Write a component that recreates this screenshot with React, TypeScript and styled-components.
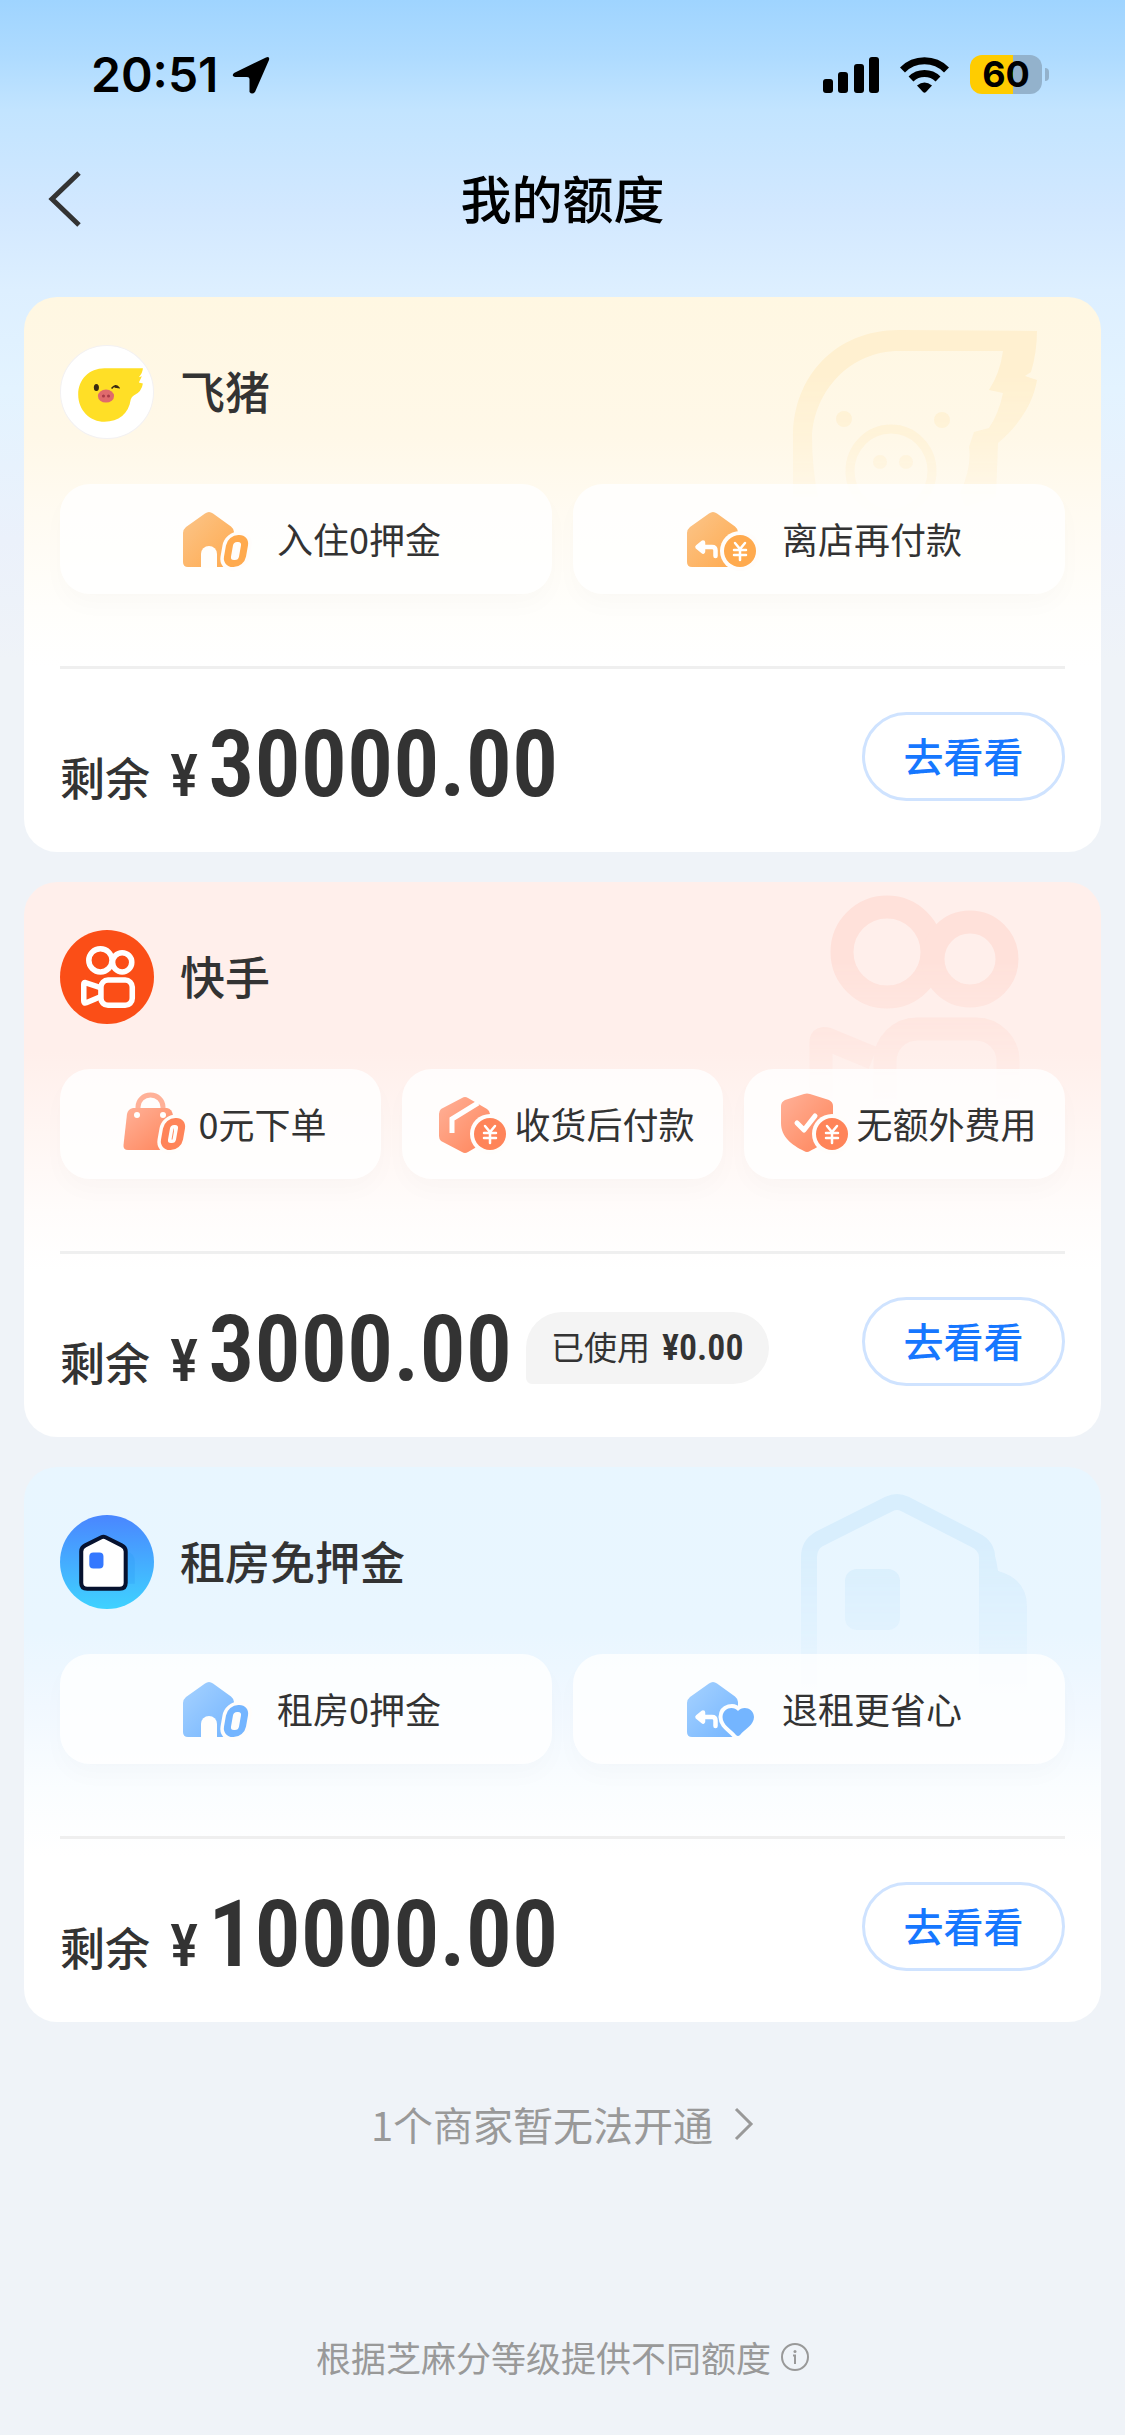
import React, { useId } from "react";
import styled, { createGlobalStyle } from "styled-components";

const CJK = `"Noto Sans CJK SC", "Noto Sans", sans-serif`;
const NUM = `"Roboto Condensed", "Liberation Sans Narrow", Roboto, sans-serif`;

const GlobalStyle = createGlobalStyle`
  * { box-sizing: border-box; }
  body { margin: 0; background: #eff3f8; }
  button { font: inherit; color: inherit; border: 0; padding: 0; background: none; cursor: pointer; }
  h1, h2, p, ul { margin: 0; padding: 0; font-weight: inherit; font-size: inherit; }
`;

const Page = styled.div`
  display: flex;
  flex-direction: column;
  min-height: 100vh;
  padding-bottom: 54px;
  font-family: ${CJK};
  color: #333;
  background: #eff3f8 linear-gradient(180deg, #9fd4ff 0, #aedbff 56px, #c2e4ff 110px, #d2e8ff 210px, #ddefff 290px, #e3f3ff 390px, #ebf1fb 540px, #eff3f8 660px) no-repeat;
`;

const StatusBar = styled.div`
  display: flex;
  align-items: center;
  justify-content: space-between;
  height: 149px;
  padding: 0 83px 0 91px;
  color: #000;
  font-family: Inter, sans-serif;
`;

const StatusGroup = styled.div<{ $gap: number }>`
  display: flex;
  align-items: center;
  gap: ${(p) => p.$gap}px;
`;

const Clock = styled.span`
  font-size: 48px;
  line-height: 60px;
  font-weight: 600;
`;

const Battery = styled.span`
  position: relative;
  display: flex;
  align-items: center;
  justify-content: center;
  width: 72px;
  height: 39px;
  border-radius: 12px;
  background: linear-gradient(90deg, #ffcc00 60%, #93b2cc 60%);
  font-size: 36px;
  line-height: 39px;
  font-weight: 700;

  &::after {
    content: "";
    position: absolute;
    left: 75px;
    top: 13px;
    width: 4px;
    height: 13px;
    border-radius: 0 4px 4px 0;
    background: #93b2cc;
  }
`;

const NavBar = styled.header`
  display: grid;
  grid-template-columns: 96px 1fr 96px;
  align-items: center;
  height: 100px;
`;

const BackButton = styled.button`
  display: flex;
  align-items: center;
  height: 100px;
  padding-left: 48px;
`;

const PageTitle = styled.h1`
  padding-bottom: 4px;
  text-align: center;
  font-size: 51px;
  line-height: 72px;
  font-weight: 500;
  color: #000;
`;

const CardList = styled.main`
  display: flex;
  flex-direction: column;
  gap: 30px;
  margin-top: 48px;
  padding: 0 24px;
`;

const Card = styled.section<{ $bg: string }>`
  position: relative;
  display: flex;
  flex-direction: column;
  padding: 48px 36px 51px;
  border-radius: 33px;
  overflow: hidden;
  background: ${(p) => p.$bg};
`;

const Watermark = styled.svg`
  position: absolute;
  right: 36px;
  top: 0;
  width: 280px;
  height: 240px;
  mask-image: linear-gradient(180deg, #000 80px, transparent 230px);
`;

const Merchant = styled.div`
  display: flex;
  align-items: center;
  gap: 26px;
  height: 94px;
`;

const MerchantName = styled.h2`
  padding-bottom: 2px;
  font-size: 45px;
  line-height: 64px;
  font-weight: 500;
`;

const Perks = styled.ul<{ $count: number }>`
  position: relative;
  display: grid;
  grid-template-columns: repeat(${(p) => p.$count}, 1fr);
  gap: 21px;
  margin-top: 45px;
  list-style: none;
`;

const Perk = styled.li<{ $gap: number }>`
  display: flex;
  align-items: center;
  justify-content: center;
  gap: ${(p) => p.$gap}px;
  height: 110px;
  border-radius: 30px;
  background: rgba(255, 255, 255, 0.8);
  box-shadow: 0 12px 24px rgba(0, 0, 0, 0.02);
  font-size: 36px;
  line-height: 50px;
  white-space: nowrap;

  svg {
    flex: none;
    overflow: visible;
  }
`;

const PerkLabel = styled.span`
  padding-bottom: 2px;
`;

const Divider = styled.hr`
  width: 100%;
  height: 3px;
  margin: 72px 0 0;
  border: 0;
  background: #efefef;
`;

const Summary = styled.div`
  display: flex;
  align-items: center;
  justify-content: space-between;
  height: 89px;
  margin-top: 43px;
`;

const Quota = styled.div`
  display: flex;
  align-items: center;
  gap: 14px;
  padding-top: 12px;
  white-space: nowrap;
`;

const Balance = styled.p`
  display: flex;
  align-items: baseline;
  padding-top: 16px;
  font-size: 45px;
  line-height: 89px;
  font-weight: 500;
`;

const Currency = styled.span`
  margin: 0 10px 0 20px;
  font-family: ${NUM};
  font-size: 60px;
  font-weight: 500;
`;

const Amount = styled.span`
  font-family: ${NUM};
  font-size: 92px;
  font-weight: 600;
`;

const UsedChip = styled.span`
  height: 72px;
  padding: 0 25px;
  border-radius: 36px 36px 36px 6px;
  background: #f4f4f4;
  font-size: 33px;
  line-height: 68px;
`;

const UsedAmount = styled.span`
  margin-left: 12px;
  font-family: ${NUM};
  font-size: 36px;
  font-weight: 600;
`;

const ViewButton = styled.button`
  flex: none;
  width: 203px;
  height: 89px;
  padding-bottom: 4px;
  border: 3px solid #cfe3ff;
  border-radius: 45px;
  background: #fff;
  color: #1677ff;
  font-size: 40px;
  line-height: 54px;
  font-weight: 500;
`;

const MoreLink = styled.a`
  display: flex;
  align-items: center;
  align-self: center;
  gap: 21px;
  margin-top: 72px;
  color: #999;
  font-size: 40px;
  line-height: 60px;
  text-decoration: none;
`;

const FootNote = styled.footer`
  display: flex;
  align-items: center;
  justify-content: center;
  gap: 10px;
  margin-top: 178px;
  color: #999;
  font-size: 35px;
  line-height: 50px;
`;

const InfoButton = styled.button`
  display: flex;
`;

type Tone = { from: string; to: string };

const HOUSE = "M33 13.500Q37 10.500 41 13.500L59 26.500Q62 29 62 32V67H16Q11 67 11 62V33Q11 29.500 14 27Z";

const Grad = ({ id, tone }: { id: string; tone: Tone }) => (
  <linearGradient id={id} x1="0" y1="0" x2="1" y2="1">
    <stop offset="0" stopColor={tone.from} />
    <stop offset="1" stopColor={tone.to} />
  </linearGradient>
);

const Coin = ({ x, y, fill }: { x: number; y: number; fill: string }) => (
  <g>
    <circle cx={x} cy={y} r="20" fill="#fffdfb" />
    <circle cx={x} cy={y} r="16" fill={fill} />
    <path
      d={`M${x - 5} ${y - 8}L${x} ${y - 2}L${x + 5} ${y - 8}M${x} ${y - 2}V${y + 9}M${x - 6} ${y - 1}H${x + 6}M${x - 6} ${y + 4}H${x + 6}`}
      fill="none"
      stroke="#fff"
      strokeWidth="2.500"
      strokeLinecap="round"
    />
  </g>
);

const SlantRing = ({ x, y, color }: { x: number; y: number; color: string }) => (
  <g transform={`translate(${x} ${y}) skewX(-10)`} fill="none">
    <rect x="-7.500" y="-12.500" width="15" height="25" rx="7" stroke="#fffdfb" strokeWidth="14" />
    <rect x="-7.500" y="-12.500" width="15" height="25" rx="7" stroke={color} strokeWidth="7" />
  </g>
);

const ReturnArrow = () => (
  <path
    d="M23 47H36Q39.500 47 39.500 50.500V56M27 42.500L21.500 47L27 51.500Z"
    fill="none"
    stroke="#fff"
    strokeWidth="4.500"
    strokeLinejoin="round"
    strokeLinecap="round"
  />
);

type PerkKind = "house0" | "houseCoin" | "houseHeart" | "bag" | "parcel" | "shield";

const PerkIcon = ({ kind, tone }: { kind: PerkKind; tone: Tone }) => {
  const id = useId();
  const fill = `url(#${id})`;
  return (
    <svg width="78" height="78" viewBox="0 0 78 78" aria-hidden="true">
      <defs>
        <Grad id={id} tone={tone} />
      </defs>
      {kind === "house0" && (
        <>
          <path d={HOUSE} fill={fill} transform="translate(1 0)" />
          <path d="M30 68V54A8 8 0 0 1 46 54V68Z" fill="#fffefc" />
          <SlantRing x={65} y={51} color={tone.to} />
        </>
      )}
      {kind === "houseCoin" && (
        <>
          <path d={HOUSE} fill={fill} />
          <ReturnArrow />
          <Coin x={64} y={51} fill={tone.to} />
        </>
      )}
      {kind === "houseHeart" && (
        <>
          <path d={HOUSE} fill={fill} />
          <ReturnArrow />
          <path
            d="M62 41C58 36 47 37 46.500 47C46.500 55 55 59 60 65Q62 67 64 65C69 59 78 55 78 47C77.500 37 66 36 62 41Z"
            fill={tone.to}
            stroke="#fcfeff"
            strokeWidth="8"
            paintOrder="stroke"
          />
        </>
      )}
      {kind === "bag" && (
        <>
          <path d="M23 26V22A12.500 12 0 0 1 48 22V26" fill="none" stroke={tone.from} strokeWidth="5" />
          <path d="M18 23H52Q57 24 58 30L60 65H13Q8 65 8.500 60L12 29Q13 24 18 23Z" fill={fill} />
          <circle cx="22" cy="30" r="3" fill="#fff" />
          <circle cx="48" cy="30" r="3" fill="#fff" />
          <SlantRing x={58} y={49} color={tone.to} />
        </>
      )}
      {kind === "parcel" && (
        <>
          <path d="M32 13Q35 11 38 13L57 24Q60 26 60 29V51Q60 54 57 56L38 67Q35 69 32 67L11 56Q9 54 9 51V29Q9 26 11 24Z" fill={fill} />
          <path d="M22 48V34L48 18" fill="none" stroke="#fff" strokeWidth="5" />
          <Coin x={60} y={49} fill={tone.to} />
        </>
      )}
      {kind === "shield" && (
        <>
          <path d="M32 9Q35 8 38 9L57 15Q61 17 61 21V38C61 52 50 60 38 66Q35 68 32 66C20 60 9 52 9 38V21Q9 17 13 15Z" fill={fill} />
          <path d="M25 38L32 45L43 31" fill="none" stroke="#fff" strokeWidth="5" strokeLinecap="round" strokeLinejoin="round" />
          <Coin x={60} y={49} fill={tone.to} />
        </>
      )}
    </svg>
  );
};

const PigLogo = () => (
  <svg width="94" height="94" viewBox="0 0 93 93" aria-hidden="true">
    <circle cx="46.500" cy="46.500" r="46" fill="#fff" stroke="#f3f1f2" />
    <path
      d="M82 23H44C29 23 18 34 18 49C18 65 30 76 44 76C58 76 68 68 70 54Q71 51 73 50Q81 46 82 38L78 37L81 31L78 32Q82 27 82 23Z"
      fill="#ffdf26"
    />
    <ellipse cx="36" cy="42" rx="2.500" ry="3.500" fill="#3a2a10" />
    <path d="M51 43Q55 38 58 42L54 41.500" fill="none" stroke="#3a2a10" strokeWidth="1.500" />
    <ellipse cx="45.500" cy="50.500" rx="8" ry="6.500" fill="#e06a6c" />
    <circle cx="43" cy="50.500" r="1.500" fill="#a83a48" />
    <circle cx="48" cy="50.500" r="1.500" fill="#a83a48" />
  </svg>
);

const CameraLogo = () => (
  <svg width="94" height="94" viewBox="0 0 93 93" aria-hidden="true">
    <circle cx="46.500" cy="46.500" r="46.500" fill="#fb4e17" />
    <g fill="none" stroke="#fff" strokeWidth="5.500" strokeLinejoin="round">
      <circle cx="40" cy="30" r="11.500" />
      <circle cx="61.500" cy="32" r="9.500" />
      <rect x="40.500" y="49.500" width="31" height="25" rx="7" />
      <path d="M40 57L25 52Q23.500 52 23.500 54V70Q23.500 73 26 72L40 66" />
    </g>
  </svg>
);

const HomeLogo = () => {
  const id = useId();
  return (
    <svg width="94" height="94" viewBox="0 0 93 93" aria-hidden="true">
      <defs>
        <linearGradient id={id} x1="0" y1="0" x2="0" y2="1">
          <stop offset="0" stopColor="#4a86ff" />
          <stop offset="1" stopColor="#3fd2ff" />
        </linearGradient>
      </defs>
      <circle cx="46.500" cy="46.500" r="46.500" fill={`url(#${id})`} />
      <path d="M66 36Q74 38 74 46V68H66Z" fill="#2b9df5" opacity=".3" />
      <path
        d="M41 22Q43 21 45 22L61 30Q65 32 65 36V67Q65 73 59 73H27Q21 73 21 67V36Q21 32 25 30Z"
        fill="#fff"
        stroke="#07122f"
        strokeWidth="4"
      />
      <rect x="29" y="37" width="14" height="16" rx="4" fill="#3478ff" />
    </svg>
  );
};

const PigMark = () => (
  <Watermark viewBox="0 0 280 240" aria-hidden="true">
    <path
      fill="#fff0d0"
      fillRule="evenodd"
      d="M8 200V140C8 80 50 33 114 33L252 34Q252 55 246 75L240 79L252 83C248 108 232 130 213 146L211 200L180 210L175 196Q187 170 184 150L189 135L204 131Q214 116 218 96L204 93Q215 76 218 54H114C65 54 29 94 27 140Q27 170 33 200Z"
    />
    <circle cx="59" cy="122" r="8" fill="#fff0d0" />
    <circle cx="157" cy="123" r="8" fill="#fff0d0" />
    <ellipse cx="106" cy="174" rx="41" ry="42" fill="none" stroke="#fff0d0" strokeWidth="9" />
    <circle cx="95" cy="165" r="7" fill="#fff0d0" />
    <circle cx="121" cy="165" r="7" fill="#fff0d0" />
  </Watermark>
);

const CameraMark = () => (
  <Watermark viewBox="0 0 280 240" aria-hidden="true">
    <g fill="none" stroke="#ffe1da" strokeWidth="23" strokeLinejoin="round">
      <circle cx="102" cy="70" r="45" />
      <circle cx="185" cy="77" r="37" />
      <rect x="100" y="147" width="123" height="110" rx="32" />
      <path d="M36 240V160Q36 155 42 157L88 176" />
    </g>
  </Watermark>
);

const HomeMark = () => (
  <Watermark viewBox="0 0 280 240" aria-hidden="true">
    <path
      d="M24 240V90Q24 78 34 72L104 37Q112 33 120 37L190 73Q202 79 202 90V240"
      fill="none"
      stroke="#d8eefd"
      strokeWidth="16"
    />
    <path d="M205 76Q211 88 213 104Q242 112 242 140V240H196V80Z" fill="#d8eefd" />
    <rect x="60" y="102" width="55" height="61" rx="12" fill="#d8eefd" />
  </Watermark>
);

const ORANGE: Tone = { from: "#fbc58a", to: "#ffaa4e" };
const CORAL: Tone = { from: "#ffb198", to: "#ff8459" };
const BLUE: Tone = { from: "#a6d2ff", to: "#74b5ff" };

type CardData = {
  name: string;
  bg: string;
  logo: React.ReactNode;
  mark: React.ReactNode;
  tone: Tone;
  perks: { kind: PerkKind; label: string }[];
  amount: string;
  used?: string;
};

const cards: CardData[] = [
  {
    name: "飞猪",
    bg: "linear-gradient(180deg, #fff7e2 0, #fff8e8 140px, #fffbf2 220px, #fffefb 310px, #fff 370px)",
    logo: <PigLogo />,
    mark: <PigMark />,
    tone: ORANGE,
    perks: [
      { kind: "house0", label: "入住0押金" },
      { kind: "houseCoin", label: "离店再付款" },
    ],
    amount: "30000.00",
  },
  {
    name: "快手",
    bg: "linear-gradient(180deg, #ffefeb 0, #ffefeb 170px, #fff6f3 250px, #fffcfb 330px, #fff 390px)",
    logo: <CameraLogo />,
    mark: <CameraMark />,
    tone: CORAL,
    perks: [
      { kind: "bag", label: "0元下单" },
      { kind: "parcel", label: "收货后付款" },
      { kind: "shield", label: "无额外费用" },
    ],
    amount: "3000.00",
    used: "¥0.00",
  },
  {
    name: "租房免押金",
    bg: "linear-gradient(180deg, #e8f6ff 0, #e9f6ff 165px, #f1f8ff 240px, #fafdff 320px, #fff 390px)",
    logo: <HomeLogo />,
    mark: <HomeMark />,
    tone: BLUE,
    perks: [
      { kind: "house0", label: "租房0押金" },
      { kind: "houseHeart", label: "退租更省心" },
    ],
    amount: "10000.00",
  },
];

const QuotaCard = ({ card }: { card: CardData }) => (
  <Card $bg={card.bg}>
    {card.mark}
    <Merchant>
      {card.logo}
      <MerchantName>{card.name}</MerchantName>
    </Merchant>
    <Perks $count={card.perks.length}>
      {card.perks.map((perk) => (
        <Perk key={perk.label} $gap={card.perks.length === 2 ? 28 : 6}>
          <PerkIcon kind={perk.kind} tone={card.tone} />
          <PerkLabel>{perk.label}</PerkLabel>
        </Perk>
      ))}
    </Perks>
    <Divider />
    <Summary>
      <Quota>
        <Balance>
          剩余
          <Currency>¥</Currency>
          <Amount>{card.amount}</Amount>
        </Balance>
        {card.used && (
          <UsedChip>
            已使用
            <UsedAmount>{card.used}</UsedAmount>
          </UsedChip>
        )}
      </Quota>
      <ViewButton type="button">去看看</ViewButton>
    </Summary>
  </Card>
);

export default function App() {
  return (
    <>
      <GlobalStyle />
      <Page>
        <StatusBar>
          <StatusGroup $gap={14}>
            <Clock>20:51</Clock>
            <svg width="38" height="38" viewBox="0 0 38 38" aria-hidden="true">
              <path d="M2 17L34 1.500Q38 0 37 4L23 36Q20 39 17.500 36V23Q17.500 21 15 21H3Q-1 20 2 17Z" fill="#000" />
            </svg>
          </StatusGroup>
          <StatusGroup $gap={21}>
            <svg width="56" height="36" viewBox="0 0 56 36" aria-hidden="true">
              <rect x="0" y="22" width="10" height="14" rx="3" />
              <rect x="15" y="15" width="10" height="21" rx="3" />
              <rect x="31" y="7" width="10" height="29" rx="3" />
              <rect x="46" y="0" width="10" height="36" rx="3" />
            </svg>
            <svg width="49" height="36" viewBox="0 0 49 36" aria-hidden="true">
              <g fill="none" stroke="#000" strokeWidth="7">
                <path d="M2.500 13A31 31 0 0 1 46.500 13" />
                <path d="M11 22A19.500 19.500 0 0 1 38 22" />
              </g>
              <path d="M17 28.500Q24.500 22.500 32 28.500L26 35Q24.500 36.500 23 35Z" />
            </svg>
            <Battery>60</Battery>
          </StatusGroup>
        </StatusBar>
        <NavBar>
          <BackButton type="button" aria-label="返回">
            <svg width="34" height="56" viewBox="0 0 34 56" aria-hidden="true">
              <path d="M31 2L4 28L31 54" fill="none" stroke="#333" strokeWidth="5" />
            </svg>
          </BackButton>
          <PageTitle>我的额度</PageTitle>
        </NavBar>
        <CardList>
          {cards.map((card) => (
            <QuotaCard key={card.name} card={card} />
          ))}
        </CardList>
        <MoreLink href="#unavailable">
          1个商家暂无法开通
          <svg width="20" height="34" viewBox="0 0 20 34" aria-hidden="true">
            <path d="M2 2L17 17L2 32" fill="none" stroke="#999" strokeWidth="3" />
          </svg>
        </MoreLink>
        <FootNote>
          根据芝麻分等级提供不同额度
          <InfoButton type="button" aria-label="说明">
            <svg width="28" height="28" viewBox="0 0 28 28" aria-hidden="true">
              <circle cx="14" cy="14" r="13" fill="none" stroke="#999" strokeWidth="2" />
              <circle cx="14" cy="8.500" r="1.500" fill="#999" />
              <path d="M12 12.500H14V21" fill="none" stroke="#999" strokeWidth="2" />
            </svg>
          </InfoButton>
        </FootNote>
      </Page>
    </>
  );
}
